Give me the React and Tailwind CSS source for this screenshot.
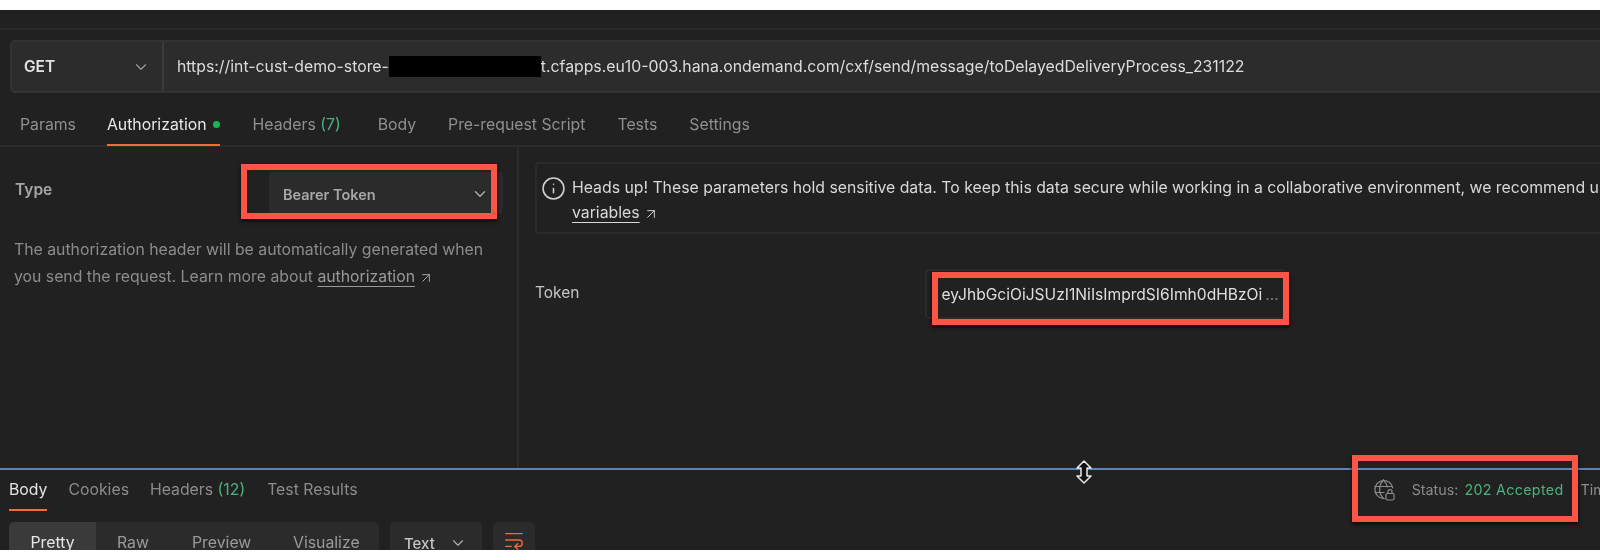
import React from "react";
import { ChevronDown, Info, ArrowUpRight, WrapText } from "lucide-react";

function RedBox({ className }) {
  return <div className={"absolute border-[6px] border-[#fb5548] shadow-[0_2px_4px_rgba(0,0,0,0.75)] " + className} />;
}

function GlobeWithLock() {
  return (
    <svg className="w-[24px] h-[24px] mr-[16px] text-[#8c8c8c]" viewBox="0 0 24 24" fill="none" stroke="currentColor" strokeWidth="1.2" strokeLinecap="round" strokeLinejoin="round">
      <path d="M12.5 20.5A9 9 0 1 1 20.8 10" />
      <path d="M11.5 2C9 4.5 7.6 8 7.6 11.5S9 18 11.5 20.5" />
      <path d="M11.5 2c2 1.900 3.300 4.400 3.800 7" />
      <path d="M3 8.500h17" />
      <path d="M3 14.500h9" />
      <rect x="14" y="15.500" width="8" height="6.500" rx="1.200" />
      <path d="M16 15.500v-1.800a2 2 0 0 1 4 0v1.800" />
    </svg>
  );
}

export default function App() {
  return (
    <div className="w-[1600px] h-[560px] bg-white pt-[10px] overflow-hidden font-['Inter',sans-serif] blur-[0.35px]">
      <div className="relative w-full h-[540px] bg-[#212121] flex flex-col overflow-hidden">
        <div className="h-[20px] shrink-0 border-b-2 border-[#2a2a2a]" />
        <div className="shrink-0 px-[10px] pt-[10px]">
          <div className="flex w-[1620px] h-[53px] rounded-[5px] bg-[#2c2c2c] border-2 border-[#333333]">
            <div className="w-[152px] shrink-0 flex items-center justify-between pl-[12px] pr-[12px] border-r-2 border-[#3a3a3a]">
              <span className="pt-[1px] text-[15.5px] font-semibold text-[#e4e4e4]">GET</span>
              <ChevronDown className="w-[18px] h-[18px] text-[#a0a0a0]" strokeWidth={1.5} />
            </div>
            <div className="flex items-center pl-[13px] text-[15.8px] text-[#dcdcdc] whitespace-nowrap">
              <span>https://int-cust-demo-store-</span>
              <span className="inline-block w-[152px] h-[21px] bg-black" />
              <span>t.cfapps.eu10-003.hana.ondemand.com/cxf/send/message/toDelayedDeliveryProcess_231122</span>
            </div>
          </div>
        </div>
        <div className="shrink-0 h-[54px] flex items-stretch pl-[20px] border-b-2 border-[#2b2b2b] text-[15.8px] text-[#8f8f8f] whitespace-nowrap">
          <div className="flex items-center pt-[11px] mr-[31px]">Params</div>
          <div className="relative flex items-center pt-[11px] mr-[33px] text-[#e8e8e8]">
            Authorization
            <span className="ml-[6px] w-[7px] h-[7px] rounded-full bg-[#12b856]" />
            <span className="absolute left-0 right-0 -bottom-[1px] h-[2px] bg-[#f26b3a]" />
          </div>
          <div className="flex items-center pt-[11px] mr-[37px]">Headers&nbsp;<span className="text-[#4bb27e]">(7)</span></div>
          <div className="flex items-center pt-[11px] mr-[32px]">Body</div>
          <div className="flex items-center pt-[11px] mr-[32px]">Pre-request Script</div>
          <div className="flex items-center pt-[11px] mr-[32px]">Tests</div>
          <div className="flex items-center pt-[11px]">Settings</div>
        </div>
        <div className="shrink-0 h-[321px] flex">
          <div className="w-[519px] shrink-0 border-r-2 border-[#2b2b2b] pl-[15px] pr-[10px]">
            <div className="flex h-[73px] items-start">
              <span className="w-[35px] mt-[31px] text-[15.5px] font-semibold text-[#a6a6a6]">Type</span>
              <div className="ml-[219px] mt-[25px] w-[234px] h-[42px] rounded-[4px] bg-[#2b2b2b] flex items-center justify-between pl-[14px] pr-[14px]">
                <span className="pt-[3px] text-[14.5px] font-semibold text-[#a8a8a8]">Bearer Token</span>
                <ChevronDown className="w-[18px] h-[18px] mt-[1px] text-[#b0b0b0]" strokeWidth={1.75} />
              </div>
            </div>
            <p className="mt-[16px] -ml-[1px] text-[15.8px] leading-[27px] text-[#8c8c8c] whitespace-nowrap">
              The authorization header will be automatically generated when<br />
              you send the request. Learn more about{" "}
              <span className="underline underline-offset-4 text-[#9a9a9a]">authorization</span>
              <ArrowUpRight className="inline-block ml-[3px] w-[16px] h-[16px] text-[#a8a8a8]" strokeWidth={1.5} />
            </p>
          </div>
          <div className="flex-1 min-w-0 pl-[16px] overflow-hidden">
            <div className="mt-[15px] w-[1200px] h-[72px] rounded-[4px] border-2 border-[#2a2a2a] flex pl-[4px] pt-[11px]">
              <Info className="shrink-0 w-[25px] h-[25px] text-[#d0d0d0] mt-[1px]" strokeWidth={1.5} />
              <div className="ml-[6px] text-[15.8px] leading-[25px] text-[#d8d8d8] whitespace-nowrap">
                <div>Heads up! These parameters hold sensitive data. To keep this data secure while working in a collaborative environment, we recommend using variables</div>
                <div>
                  <span className="underline underline-offset-4">variables</span>
                  <ArrowUpRight className="inline-block ml-[3px] w-[16px] h-[16px] text-[#d0d0d0]" strokeWidth={1.5} />
                </div>
              </div>
            </div>
            <div className="flex items-start mt-[35px]">
              <span className="mt-[12px] text-[15.5px] text-[#c4c4c4]">Token</span>
              <div className="ml-[346px] w-[360px] h-[50px] rounded-[4px] border-2 border-[#2b2b2b] flex items-center pl-[14px] pt-[2px] text-[15.6px] text-[#dedede] whitespace-nowrap">
                eyJhbGciOiJSUzI1NiIsImprdSI6Imh0dHBzOi<span className="text-[#7a7a7a] ml-[3px]">...</span>
              </div>
            </div>
          </div>
        </div>
        <div className="shrink-0 h-[2px] bg-[#5c84bb]" />
        <div className="shrink-0 h-[41px] flex items-stretch pl-[9px] text-[15.8px] text-[#8c8c8c] whitespace-nowrap">
          <div className="relative flex items-center mr-[21px] text-[#e4e4e4] pb-[2px]">
            Body
            <span className="absolute left-0 right-0 bottom-0 h-[2px] bg-[#f26b3a]" />
          </div>
          <div className="flex items-center mr-[21px] pb-[2px]">Cookies</div>
          <div className="flex items-center mr-[22px] pb-[2px]">Headers&nbsp;<span className="text-[#4bb27e]">(12)</span></div>
          <div className="flex items-center pb-[2px]">Test Results</div>
          <div className="ml-auto mr-[-14px] flex items-center pb-[2px] text-[14.3px] text-[#8c8c8c]">
            <GlobeWithLock />
            <span className="mr-[2px]">Status:&nbsp;</span>
            <span className="text-[#4bb27e] mr-[17px] tracking-[0.3px]">202 Accepted</span>
            <span>Time</span>
          </div>
        </div>
        <div className="shrink-0 flex pl-[9px] pt-[11px] text-[15.8px] whitespace-nowrap">
          <div className="flex h-[44px] w-[370px] rounded-[5px] bg-[#2b2b2b] text-[#9a9a9a]">
            <div className="w-[87px] bg-[#3a3a3a] rounded-l-[5px] flex justify-center pt-[9px] text-[#e6e6e6]">Pretty</div>
            <div className="w-[96px] pl-[21px] pt-[9px]">Raw</div>
            <div className="w-[101px] pt-[9px]">Preview</div>
            <div className="pt-[9px]">Visualize</div>
          </div>
          <div className="ml-[11px] w-[92px] h-[44px] rounded-[5px] bg-[#2b2b2b] flex justify-between pl-[14px] pr-[15px] pt-[11px] text-[15px] font-medium text-[#c4c4c4]">
            Text
            <ChevronDown className="w-[18px] h-[18px] mt-[1px] text-[#b0b0b0]" strokeWidth={1.5} />
          </div>
          <div className="ml-[11px] w-[42px] h-[44px] rounded-[5px] bg-[#2b2b2b] flex justify-center pt-[7px]">
            <WrapText className="w-[22px] h-[22px] text-[#f26b3a]" strokeWidth={1.5} />
          </div>
        </div>
        <RedBox className="left-[241px] top-[154px] w-[256px] h-[55px]" />
        <RedBox className="left-[932px] top-[262px] w-[357px] h-[53px]" />
        <RedBox className="left-[1352px] top-[445px] w-[226px] h-[67px]" />
        <svg className="absolute left-[1074px] top-[450px] w-[20px] h-[24px]" viewBox="0 0 20 24">
          <path d="M10 1 L17 8 H13 V16 H17 L10 23 L3 16 H7 V8 H3 Z" fill="#111" stroke="#e8e8e8" strokeWidth="1.5" strokeLinejoin="round" />
        </svg>
      </div>
    </div>
  );
}
